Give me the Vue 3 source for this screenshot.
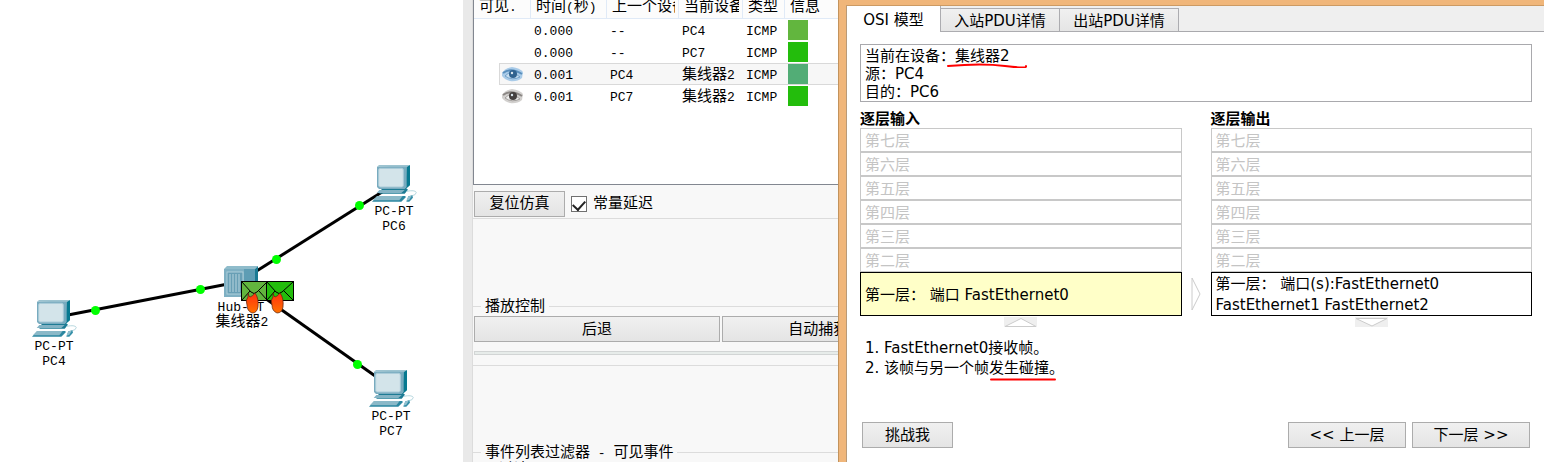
<script setup>
import { ref } from 'vue'

const devices = [
  { name: 'PC6', x: 372, y: 165 },
  { name: 'PC4', x: 32, y: 300 },
  { name: 'PC7', x: 369, y: 370 },
]
const links = ['M68 315 L228 284', 'M255 272 L382 192', 'M262 296 L378 378']
const ports = [[95.5, 310.5], [200.5, 289.5], [276.5, 259.5], [359.5, 205.5], [357.5, 364.5]]
const packets = [
  { x: 241, w: 26, fill: '#62b63e' },
  { x: 266, w: 27, fill: '#23bd0c' },
]
const events = [
  { time: '0.000', last: '--', at: 'PC4', color: '#62b63e' },
  { time: '0.000', last: '--', at: 'PC7', color: '#23bd0c' },
  { time: '0.001', last: 'PC4', hub: true, at: '2', color: '#52ad76', eye: 'blue' },
  { time: '0.001', last: 'PC7', hub: true, at: '2', color: '#23bd0c', eye: 'gray' },
]
const eyes = {
  blue: { skin: '#a9cbe8', lid: '#5a8fbd', iris: '#2f628f', white: '#c9dff0' },
  gray: { skin: '#d2d0ce', lid: '#8b8784', iris: '#44403e', white: '#efefee' },
}
const layers = ['第七层', '第六层', '第五层', '第四层', '第三层', '第二层']
const tabs = ['OSI 模型', '入站PDU详情', '出站PDU详情']
const activeTab = ref(0)
const constantDelay = ref(true)
</script>

<template>
  <main class="page">
    <section class="canvas">
      <svg class="topology" width="463" height="440" viewBox="0 0 463 440">
        <defs>
          <linearGradient id="flame" x1="0" y1="0" x2="0" y2="1">
            <stop offset="0" stop-color="#ff2f10" />
            <stop offset="1" stop-color="#ff7200" />
          </linearGradient>
          <symbol id="pc" viewBox="0 0 135 111">
            <path d="M32 66 H98 L108 74 L98 86 H22 Z" fill="#1d7b94" />
            <path d="M22 75 H98 L88 84 H14 Z" fill="#83b3c4" />
            <path d="M15 5 L21 0 H114 L104 7 Z" fill="#9cc3d0" />
            <path d="M103 7 L114 0 V61 L101 72 Z" fill="#077990" />
            <path d="M15 5 H104 V66 L98 72 H21 L15 66 Z" fill="#78abbf" />
            <rect x="20" y="10" width="74" height="56" rx="5" fill="#d3e4ea" stroke="#a9cbd8" stroke-width="3" />
            <path d="M16 93 H99 L102 96 L88 110 H0 Z" fill="#2b87a0" />
            <path d="M15 93 H92 L82 106 H3 Z" fill="#8bb9c8" />
            <path d="M104 79 Q128 74 133 82 Q133 90 118 93" fill="none" stroke="#b9d9e0" stroke-width="3" />
            <path d="M109 94 L121 91 L123 98 L112 110 H103 Z" fill="#358fa8" />
            <path d="M109 94 L119 92 L112 104 L103 107 Z" fill="#91c0cf" />
          </symbol>
        </defs>

        <path v-for="d in links" :key="d" :d="d" stroke="#000" stroke-width="3" fill="none" />
        <circle v-for="(p, i) in ports" :key="i" :cx="p[0]" :cy="p[1]" r="4.5" fill="#00ff00" />

        <g v-for="d in devices" :key="d.name">
          <use href="#pc" :x="d.x" :y="d.y" width="45" height="37" />
          <text class="label" :x="d.x + 22" :y="d.y + 50">PC-PT</text>
          <text class="label" :x="d.x + 22" :y="d.y + 65">{{ d.name }}</text>
        </g>

        <g>
          <path d="M224 269 L227 266 H258 L255 269 Z" fill="#8fbccb" />
          <path d="M255 269 L258 266 V293 L255 297 Z" fill="#1a7a93" />
          <rect x="224" y="269" width="31" height="28" fill="#5e9db4" />
          <rect x="224" y="269" width="20" height="28" fill="#7fb0c3" />
          <rect x="227" y="272" width="16" height="22" fill="#689fb5" stroke="#b0d0db" />
          <path d="M230 274 V292 M233 274 V292 M236 274 V292 M239 274 V292" stroke="#b8d5df" />
          <text class="label" x="241" y="311">Hub-PT</text>
          <text class="label cjk" x="242" y="326">集线器<tspan class="latin">2</tspan></text>
        </g>

        <g v-for="p in packets" :key="p.x" stroke="#000">
          <rect :x="p.x + 0.5" y="281.5" :width="p.w" height="19" :fill="p.fill" />
          <path
            :d="`M${p.x + 1} 282 L${p.x + 10} 292 Q${p.x + 13} 295 ${p.x + 16} 292 L${p.x + p.w} 282 M${p.x + 1} 300 L${p.x + 9} 291 M${p.x + p.w} 300 L${p.x + 18} 291`"
            fill="none"
          />
          <path
            :d="`M${p.x + 7} 293 Q${p.x + 8} 297 ${p.x + 9} 297 Q${p.x + 12} 296 ${p.x + 14} 293 Q${p.x + 18} 298 ${p.x + 17} 307 Q${p.x + 16} 313 ${p.x + 11} 313 Q${p.x + 6} 311 ${p.x + 6} 305 Q${p.x + 4} 300 ${p.x + 7} 297 Z`"
            fill="url(#flame)"
            stroke="#5a2410"
            stroke-width="0.7"
          />
        </g>
      </svg>
    </section>

    <section class="simulation">
      <div class="event-list">
        <table>
          <colgroup>
            <col class="c-vis" /><col class="c-time" /><col class="c-last" />
            <col class="c-at" /><col class="c-type" /><col />
          </colgroup>
          <thead>
            <tr>
              <th><div>可见<span class="latin">.</span></div></th>
              <th><div>时间<span class="latin">(</span>秒<span class="latin">)</span></div></th>
              <th><div>上一个设备</div></th>
              <th><div>当前设备</div></th>
              <th><div>类型</div></th>
              <th><div>信息</div></th>
            </tr>
          </thead>
          <tbody>
            <tr v-for="(e, i) in events" :key="i" :class="{ selected: i === 2 }">
              <td class="vis">
                <span class="eye-cell">
                  <svg v-if="e.eye" width="21" height="15" viewBox="0 0 21 15">
                    <path d="M0 6 Q3 1 10 0 Q18 1 21 5 L20 11 Q15 15 8 14 Q3 13 0 9 Z" :fill="eyes[e.eye].skin" />
                    <path d="M1 6 Q9 0 20 7" fill="none" :stroke="eyes[e.eye].lid" stroke-width="2" />
                    <path d="M3 9 Q9 2 18 10 Q10 14 3 9" :fill="eyes[e.eye].white" :stroke="eyes[e.eye].lid" stroke-width="0.7" />
                    <circle cx="11" cy="7" r="4" :fill="eyes[e.eye].iris" />
                    <circle cx="10" cy="6" r="1.2" fill="#dde8ef" />
                  </svg>
                </span>
              </td>
              <td><span class="latin">{{ e.time }}</span></td>
              <td><span class="latin">{{ e.last }}</span></td>
              <td><template v-if="e.hub">集线器</template><span class="latin">{{ e.at }}</span></td>
              <td><span class="latin">ICMP</span></td>
              <td class="info-cell"><i class="swatch" :style="{ background: e.color }"></i></td>
            </tr>
          </tbody>
        </table>
      </div>

      <div class="reset-row">
        <button type="button" class="btn reset">复位仿真</button>
        <label class="check"><input v-model="constantDelay" type="checkbox" /><span>常量延迟</span></label>
      </div>

      <fieldset class="group playback">
        <legend>播放控制</legend>
        <div class="play-buttons">
          <button type="button" class="btn">后退</button>
          <button type="button" class="btn">自动捕获<span class="latin"> / </span>播放</button>
        </div>
        <div class="groove"></div>
      </fieldset>

      <fieldset class="group filters">
        <legend>事件列表过滤器<span class="latin"> - </span>可见事件</legend>
        <div class="filter-name">过滤器</div>
      </fieldset>
    </section>

    <section class="window">
      <div class="pane">
        <nav class="tabs">
          <button
            v-for="(t, i) in tabs"
            :key="t"
            type="button"
            class="tab"
            :class="{ active: i === activeTab }"
            @click="activeTab = i"
          >{{ t }}</button>
        </nav>
        <div class="content">
          <div class="info">
            <div>当前在设备：<span class="marked">集线器2<svg class="stroke wide" viewBox="0 0 80 5"><path d="M1 3 Q35 0 58 3 T79 3" /></svg></span></div>
            <div>源：PC4</div>
            <div>目的：PC6</div>
          </div>

          <div class="stacks">
            <div class="stack">
              <h2>逐层输入</h2>
              <div v-for="l in layers" :key="l" class="layer">{{ l }}</div>
              <div class="layer current input">第一层： 端口 FastEthernet0</div>
              <svg class="vertical" width="33" height="10" viewBox="0 0 33 10">
                <rect width="33" height="10" fill="#efefef" />
                <path d="M1 9.5 L17 1.5 L32 9.5 Z" fill="#fff" stroke="#ccc" />
              </svg>
            </div>
            <svg class="across" width="10" height="34" viewBox="0 0 10 34">
              <path d="M1 1 L9 17 L1 33 Z" fill="#fff" stroke="#ccc" />
            </svg>
            <div class="stack">
              <h2>逐层输出</h2>
              <div v-for="l in layers" :key="l" class="layer">{{ l }}</div>
              <div class="layer current output">第一层： 端口(s):FastEthernet0<br />FastEthernet1 FastEthernet2</div>
              <svg class="vertical" width="33" height="10" viewBox="0 0 33 10">
                <rect width="33" height="10" fill="#efefef" />
                <path d="M1 1.5 H32 L17 9 Z" fill="#fff" stroke="#ccc" />
              </svg>
            </div>
          </div>

          <ol class="steps">
            <li>FastEthernet0接收帧。</li>
            <li>该帧与另一个帧<span class="marked">发生碰撞。<svg class="stroke" viewBox="0 0 66 5"><path d="M1 2.5 H65" /></svg></span></li>
          </ol>

          <div class="actions">
            <button type="button" class="btn challenge">挑战我</button>
            <button type="button" class="btn">&lt;&lt; 上一层</button>
            <button type="button" class="btn">下一层 &gt;&gt;</button>
          </div>
        </div>
      </div>
    </section>
  </main>
</template>

<style>
body {
  margin: 0;
  overflow: hidden;
}
</style>

<style scoped>
* {
  box-sizing: border-box;
}
.page {
  display: grid;
  grid-template-columns: 463fr 375fr 706fr;
  height: 100vh;
  background: #fff;
  color: #000;
  font: 15px/18px "Liberation Mono", "Noto Sans CJK SC", monospace;
}
.latin {
  font-size: 13px;
  white-space: pre;
}
.canvas {
  min-width: 0;
  overflow: hidden;
}
.topology {
  display: block;
}
.label {
  font-size: 13px;
  text-anchor: middle;
}
.label.cjk {
  font-size: 15px;
}
.label .latin {
  font-size: 13px;
}

.simulation {
  min-width: 0;
  overflow: hidden;
  background: #f8f8f8;
  border-left: 9px solid #e9e9e9;
  box-shadow: inset 1px 0 #dcdcdc;
}
.event-list {
  height: 185px;
  margin-left: 1px;
  overflow: hidden;
  background: #fff;
  border-left: 1px solid #828790;
  border-bottom: 1px solid #828790;
}
table {
  width: 100%;
  margin-top: -7px;
  table-layout: fixed;
  border-collapse: separate;
  border-spacing: 0;
}
.c-vis { width: 57px; }
.c-time { width: 76px; }
.c-last { width: 72px; }
.c-at { width: 64px; }
.c-type { width: 42px; }
th {
  height: 26px;
  padding: 4px 3px 0 5px;
  font-weight: 400;
  text-align: left;
  white-space: nowrap;
  background: #fcfcfc;
  border-right: 1px solid #e0eaf7;
  border-bottom: 1px solid #e0eaf7;
}
th div {
  overflow: hidden;
}
th:last-child {
  border-right: 0;
}
td {
  height: 22px;
  padding: 3px 0 0 3px;
  white-space: nowrap;
}
td.vis {
  padding: 0 0 0 25px;
}
td.info-cell {
  padding-top: 0;
}
.eye-cell {
  display: flex;
  align-items: center;
  height: 22px;
  padding-left: 2px;
  border: 1px solid transparent;
  border-right: 0;
}
.selected .eye-cell {
  background: #f7f7f7;
  border-color: #d9d9d9;
}
.selected td:not(.vis) {
  background: #f7f7f7;
  box-shadow: inset 0 1px #d9d9d9, inset 0 -1px #d9d9d9;
}
.swatch {
  display: block;
  width: 20px;
  height: 20px;
}

.btn {
  height: 26px;
  padding: 0;
  font: inherit;
  color: #000;
  white-space: nowrap;
  background: linear-gradient(#f0f0f0, #e4e4e4);
  border: 1px solid #acacac;
}
.simulation .btn {
  padding-top: 3px;
}
.reset-row {
  display: flex;
  align-items: center;
  gap: 6px;
  height: 34px;
  padding: 4px 0 0 2px;
  border-bottom: 1px solid #dcdcdc;
}
.reset {
  width: 91px;
}
.check {
  display: flex;
  align-items: center;
  gap: 6px;
}
.check span {
  padding-top: 3px;
}
.check input {
  display: flex;
  justify-content: center;
  width: 16px;
  height: 16px;
  margin: 0;
  appearance: none;
  background: #fff;
  border: 1px solid #707070;
}
.check input:checked::after {
  width: 6px;
  height: 10px;
  margin-top: 1px;
  content: "";
  border: solid #222;
  border-width: 0 2px 2px 0;
  transform: rotate(42deg);
}
.group {
  min-width: 0;
  margin: 0;
  padding: 0 0 0 1px;
  border: 1px solid #dcdcdc;
  border-right: 0;
}
.group legend {
  height: 18px;
  margin-left: 7px;
  padding: 0 4px;
  line-height: 22px;
}
.playback {
  margin-top: 78px;
}
.play-buttons {
  display: flex;
  gap: 2px;
  padding-top: 1px;
}
.play-buttons .btn {
  flex: 0 0 246px;
}
.groove {
  height: 4px;
  margin: 9px 0 10px;
  background: #e7ecea;
  border: 1px solid #d2d5d5;
  border-right: 0;
}
.filters {
  margin-top: 77px;
}
.filter-name {
  padding-left: 25px;
  line-height: 20px;
}

.window {
  min-width: 0;
  padding: 5px 0 0 7px;
  background: #f0b67a;
  border-left: 1px solid #c3935c;
  font-family: "DejaVu Sans", "Noto Sans CJK SC", sans-serif;
}
.pane {
  height: 100%;
  background: #fff;
  border-top: 1px solid #cc9a63;
  border-left: 1px solid #b99a78;
}
.tabs {
  display: flex;
  align-items: flex-end;
  height: 26px;
  background: linear-gradient(#a9a9ad, #a9a9ad) bottom / 100% 1px no-repeat #efefef;
}
.tab {
  width: 119px;
  height: 24px;
  padding: 2px 0 0;
  font: inherit;
  background: linear-gradient(#f0f0f0, #e5e5e5);
  border: 1px solid #acacb0;
  border-left: 0;
}
.tab.active {
  width: 94px;
  height: 26px;
  background: #fff;
  border-width: 0 1px 0 0;
}
.content {
  padding: 12px 12px 0 13px;
}
.info {
  padding: 2px 4px 0;
  border: 1px solid #a9a9ad;
}
.marked {
  position: relative;
}
.stroke {
  position: absolute;
  top: 100%;
  left: 1px;
  width: 66px;
  height: 5px;
  fill: none;
  stroke: #f00;
  stroke-width: 2;
  stroke-linecap: round;
}
.stroke.wide {
  left: -8px;
  width: 80px;
}
.info .stroke {
  top: 16px;
}
.stacks {
  display: grid;
  grid-template-columns: 1fr 29px 1fr;
  margin-top: 8px;
}
.stack {
  display: flex;
  flex-direction: column;
}
h2 {
  margin: 0;
  font-size: 15px;
  line-height: 18px;
}
.layer {
  height: 24px;
  padding-left: 4px;
  line-height: 24px;
  color: #c4c4c4;
  border: 1px solid #c8c8c8;
}
.layer.current {
  display: flex;
  align-items: center;
  height: 44px;
  padding-top: 2px;
  line-height: 21px;
  color: #000;
  border-color: #000;
}
.layer.input {
  background: #ffffc8;
}
.vertical {
  align-self: center;
  margin-top: 1px;
}
.across {
  align-self: end;
  justify-self: center;
  margin-bottom: 16px;
}
.steps {
  margin: 11px 0 0;
  padding-left: 24px;
  line-height: 20px;
}
.actions {
  display: flex;
  gap: 6px;
  margin-top: 44px;
  padding: 0 2px;
}
.actions .btn {
  width: 118px;
}
.actions .challenge {
  width: 91px;
  margin-right: auto;
}
</style>
